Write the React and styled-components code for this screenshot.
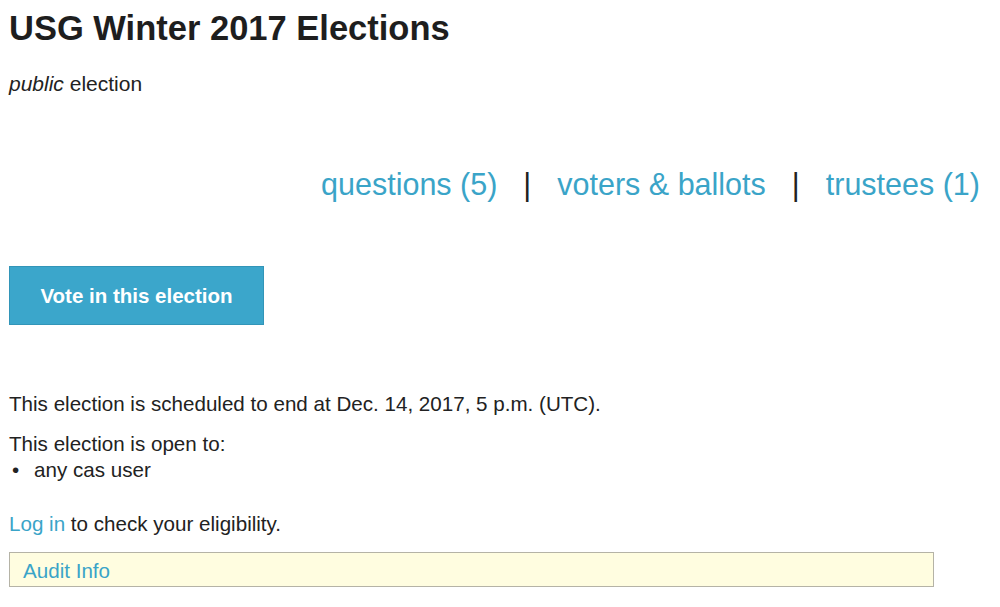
import React from "react";
import styled, { createGlobalStyle } from "styled-components";

const GlobalStyle = createGlobalStyle`
	body {
		margin: 0;
		background: #ffffff;
		color: #222222;
		font-family: "Liberation Sans", Arial, sans-serif;
	}
`;

const Page = styled.main`
	padding: 0 20px 0 9px;
`;

const Title = styled.h1`
	margin: 0;
	padding-top: 8px;
	font-size: 34.5px;
	line-height: 40px;
	font-weight: bold;
	color: #1e1e1e;
`;

const Subtitle = styled.p`
	margin: 24px 0 0;
	font-size: 21px;
	line-height: 24px;

	em {
		font-style: italic;
	}
`;

const Nav = styled.nav`
	display: flex;
	justify-content: flex-end;
	align-items: center;
	gap: 26px;
	margin-top: 70px;
	font-size: 30.5px;
	line-height: 36px;
`;

const Sep = styled.span`
	color: #222222;
`;

const Link = styled.a`
	color: #3aa4c8;
	text-decoration: none;
	cursor: pointer;
`;

const VoteButton = styled.button`
	display: block;
	margin-top: 64px;
	width: 255px;
	height: 59px;
	border: 1px solid #3295b8;
	background: #3ba6cb;
	color: #ffffff;
	font-family: inherit;
	font-size: 20.5px;
	font-weight: bold;
	cursor: pointer;
`;

const Text = styled.p`
	margin: ${({ $top }) => $top}px 0 0;
	font-size: 20.6px;
	line-height: 24px;
`;

const Bullets = styled.ul`
	margin: 2px 0 0;
	padding: 0;
	list-style: none;
	font-size: 20.6px;
	line-height: 24px;

	li::before {
		content: "•";
		display: inline-block;
		width: 22px;
		padding-left: 3px;
	}
`;

const AuditBox = styled.div`
	margin-top: 16px;
	width: 925px;
	height: 35px;
	box-sizing: border-box;
	border: 1px solid #b5b3a6;
	background: #fffde0;
	padding: 6px 0 0 13px;
	font-size: 20.6px;
	line-height: 24px;
`;

export default function App() {
	return (
		<>
			<GlobalStyle />
			<Page>
				<Title>USG Winter 2017 Elections</Title>
				<Subtitle>
					<em>public</em> election
				</Subtitle>

				<Nav>
					<Link>questions (5)</Link>
					<Sep>|</Sep>
					<Link>voters &amp; ballots</Link>
					<Sep>|</Sep>
					<Link>trustees (1)</Link>
				</Nav>

				<VoteButton>Vote in this election</VoteButton>

				<Text $top={67}>
					This election is scheduled to end at Dec. 14, 2017, 5 p.m. (UTC).
				</Text>
				<Text $top={16}>This election is open to:</Text>
				<Bullets>
					<li>any cas user</li>
				</Bullets>

				<Text $top={30}>
					<Link>Log in</Link> to check your eligibility.
				</Text>

				<AuditBox>
					<Link>Audit Info</Link>
				</AuditBox>
			</Page>
		</>
	);
}
